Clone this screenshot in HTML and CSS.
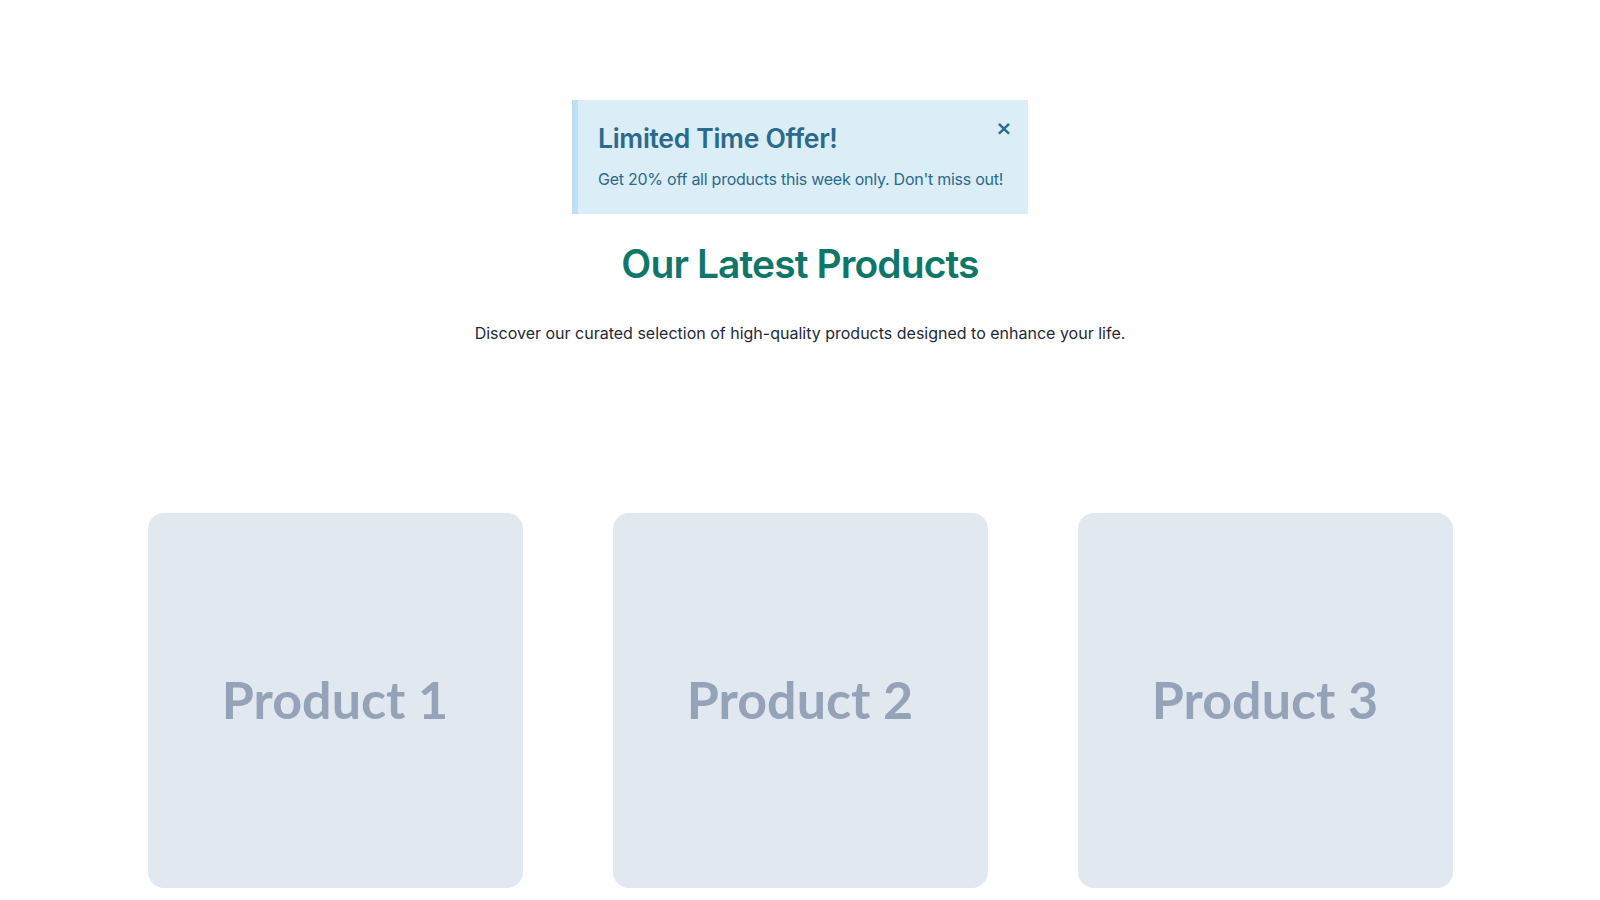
FILE: index.html
```html
<!DOCTYPE html>
<html lang="en">
<head>
    <meta charset="UTF-8">
    <meta name="viewport" content="width=device-width, initial-scale=1.0">
    <title>Our Latest Products</title>
    <link rel="stylesheet" href="styles.css">
</head>
<body>
    <main class="page">
        <div class="offer" id="offer">
            <button class="offer-close" aria-label="Close">&times;</button>
            <h2 class="offer-title">Limited Time Offer!</h2>
            <p class="offer-text">Get 20% off all products this week only. Don't miss out!</p>
        </div>

        <h1 class="title">Our Latest Products</h1>
        <p class="subtitle">Discover our curated selection of high-quality products designed to enhance your life.</p>

        <section class="products">
            <div class="product">Product 1</div>
            <div class="product">Product 2</div>
            <div class="product">Product 3</div>
        </section>
    </main>
    <script>
        document.querySelector('.offer-close').addEventListener('click', function() {
            document.getElementById('offer').style.display = 'none';
        });
    </script>
</body>
</html>
```

FILE: styles.css
```css
body {
    margin: 0;
    font-family: Inter, "Noto Sans", sans-serif;
    background-color: #ffffff;
    color: #1f2937;
}
.page {
    display: flex;
    flex-direction: column;
    align-items: center;
    padding-top: 100px;
}
/* Promo banner */
.offer {
    position: relative;
    box-sizing: border-box;
    width: 456px;
    padding: 20px 20px 23px 20px;
    background-color: #dbedf6;
    border-left: 6px solid #bde0f3;
    color: #2a6a8c;
}
.offer-title {
    margin: 0 0 11px 0;
    font-size: 26.5px;
    line-height: 36px;
    font-weight: 600;
    letter-spacing: -0.3px;
}
.offer-text {
    margin: 0;
    font-size: 16px;
    line-height: 24px;
    letter-spacing: -0.25px;
    white-space: nowrap;
}
.offer-close {
    position: absolute;
    top: 14px;
    right: 12px;
    width: 24px;
    height: 28px;
    padding: 0;
    border: none;
    background: none;
    color: #2a6a8c;
    font-family: "DejaVu Sans", sans-serif;
    font-size: 20px;
    font-weight: bold;
    line-height: 28px;
    cursor: pointer;
}
/* Heading */
.title {
    margin: 23px 0 0 0;
    font-size: 39px;
    line-height: 53px;
    font-weight: 600;
    letter-spacing: -0.9px;
    color: #0f766a;
}
.subtitle {
    margin: 31px 0 0 0;
    font-size: 16px;
    line-height: 24px;
}
/* Product tiles */
.products {
    display: grid;
    grid-template-columns: repeat(3, 375px);
    gap: 90px;
    margin-top: 168px;
}
.product {
    box-sizing: border-box;
    display: flex;
    align-items: center;
    justify-content: center;
    height: 375px;
    padding-bottom: 4px;
    border-radius: 16px;
    background-color: #e2e8f0;
    color: #94a3b8;
    font-family: Lato, sans-serif;
    font-size: 52px;
    font-weight: bold;
}
```
